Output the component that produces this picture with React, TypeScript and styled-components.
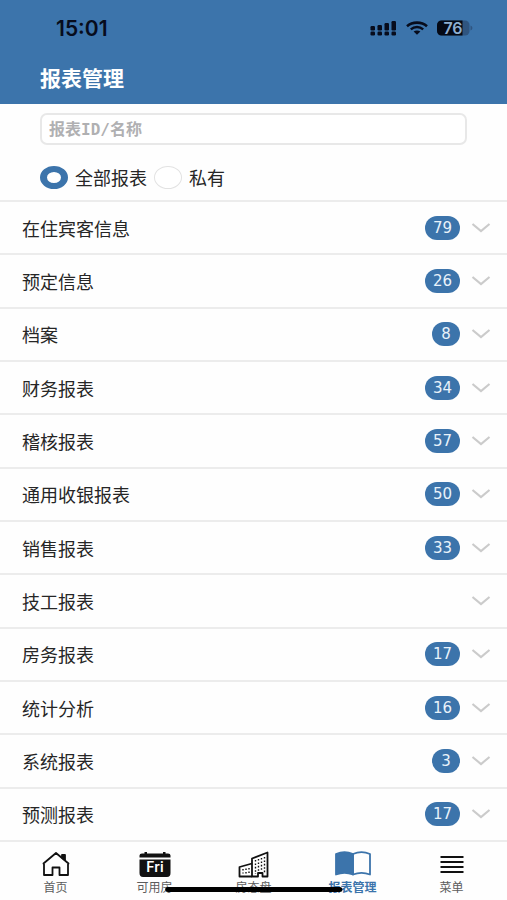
import React, { useState } from "react";
import styled, { createGlobalStyle } from "styled-components";

const BLUE = "#3c74ab";
const LINE = "#ececec";

const GlobalStyle = createGlobalStyle`
  * { box-sizing: border-box; }
  body {
    margin: 0;
    background: #fefefe;
    color: #262626;
    font-family: "DejaVu Sans", "Noto Sans CJK SC", sans-serif;
  }
  button, input { font: inherit; color: inherit; }
`;

const Page = styled.div`
  display: flex;
  flex-direction: column;
  min-height: 100vh;
`;

const Header = styled.header`
  flex: none;
  background: ${BLUE};
  color: #fff;
`;

const StatusBar = styled.div`
  display: flex;
  align-items: center;
  justify-content: space-between;
  height: 56px;
  padding: 0 34px 0 56px;
  color: #070c1c;
`;

const Clock = styled.time`
  padding-top: 2px;
  font: 600 21px/24px Inter, sans-serif;
`;

const StatusIcons = styled.div`
  display: flex;
  align-items: center;
  gap: 9px;
`;

const Title = styled.h1`
  margin: 0;
  padding: 5px 40px 11px;
  font-size: 21px;
  font-weight: 600;
  line-height: 32px;
  font-family: "Noto Sans CJK SC", sans-serif;
`;

const Filters = styled.form`
  flex: none;
  padding: 9px 40px 11px;
`;

const SearchInput = styled.input`
  display: block;
  width: 100%;
  height: 32px;
  padding: 0 7px;
  border: 2px solid #e8e8e8;
  border-radius: 7px;
  background: #fff;
  outline: none;
  font-family: "DejaVu Sans Mono", "Noto Sans CJK SC", monospace;
  font-size: 16px;
  font-weight: 700;
  &::placeholder { color: #b0b0b2; opacity: 1; }
`;

const RadioGroup = styled.div`
  display: flex;
  align-items: center;
  gap: 7px;
  margin-top: 20px;
`;

const RadioLabel = styled.label`
  display: flex;
  align-items: center;
  gap: 7px;
  font-size: 18px;
`;

const RadioText = styled.span`
  padding-top: 4px;
  line-height: 20px;
`;

const Radio = styled.input`
  appearance: none;
  width: 28px;
  height: 23px;
  margin: 0;
  border: 1px solid #e2e2e2;
  border-radius: 50%;
  background: #fff;
  &:checked {
    border: solid ${BLUE};
    border-width: 6px 7px;
  }
`;

const List = styled.ul`
  display: flex;
  flex: 1;
  flex-direction: column;
  margin: 0;
  padding: 0;
  list-style: none;
`;

const Item = styled.li`
  display: flex;
  flex: 1;
  border-top: 2px solid ${LINE};
`;

const RowButton = styled.button`
  display: flex;
  flex: 1;
  align-items: center;
  min-height: 48px;
  padding: 0 16px 0 22px;
  border: 0;
  background: none;
  text-align: left;
  font-size: 18px;
  line-height: 24px;
`;

const RowName = styled.span`
  flex: 1;
  padding-top: 4px;
`;

const Badge = styled.span`
  padding: 0 8px;
  min-width: 28px;
  border-radius: 12px;
  background: ${BLUE};
  color: #e9f2fa;
  font-size: 15px;
  line-height: 24px;
  text-align: center;
`;

const Chevron = styled.svg`
  margin-left: 11px;
`;

const TabBar = styled.nav`
  position: relative;
  display: flex;
  flex: none;
  height: 60px;
  padding: 0 6px;
  border-top: 2px solid ${LINE};
`;

const Tab = styled.a<{ $active?: boolean }>`
  display: flex;
  flex: 1;
  flex-direction: column;
  align-items: center;
  gap: 2px;
  padding-top: 8px;
  color: ${(p) => (p.$active ? BLUE : "#5c5c5c")};
  font-size: 12px;
  font-weight: ${(p) => (p.$active ? 700 : 400)};
  line-height: 16px;
  text-decoration: none;
  svg { color: ${(p) => (p.$active ? BLUE : "#111")}; }
`;

const HomeIndicator = styled.div`
  position: absolute;
  bottom: 8px;
  left: 50%;
  width: 35%;
  height: 5px;
  border-radius: 3px;
  background: #000;
  transform: translateX(-50%);
`;

const reports: { name: string; count?: number }[] = [
  { name: "在住宾客信息", count: 79 },
  { name: "预定信息", count: 26 },
  { name: "档案", count: 8 },
  { name: "财务报表", count: 34 },
  { name: "稽核报表", count: 57 },
  { name: "通用收银报表", count: 50 },
  { name: "销售报表", count: 33 },
  { name: "技工报表" },
  { name: "房务报表", count: 17 },
  { name: "统计分析", count: 16 },
  { name: "系统报表", count: 3 },
  { name: "预测报表", count: 17 },
];

const SignalIcon = () => (
  <svg width="27" height="15" viewBox="0 0 27 15" fill="currentColor" aria-hidden="true">
    <rect x="0.5" y="5" width="4.5" height="4.5" rx="1.2" />
    <rect x="7.5" y="4" width="4.5" height="5.5" rx="1.2" />
    <rect x="14.5" y="2" width="4.5" height="7.5" rx="1.2" />
    <rect x="21.5" y="0" width="4.5" height="9.5" rx="1.2" />
    {[0.5, 7.5, 14.5, 21.5].map((x) => (
      <rect key={x} x={x} y="10.5" width="4.5" height="4" rx="1.2" />
    ))}
  </svg>
);

const WifiIcon = () => (
  <svg width="22" height="14" viewBox="0 0 22 14" fill="none" stroke="currentColor" aria-hidden="true">
    <path d="M1 5.2C6.5 0.4 15.5 0.4 21 5.2" strokeWidth="2.6" />
    <path d="M4.8 8.4C8.4 5.2 13.6 5.2 17.2 8.4" strokeWidth="2.4" />
    <path d="M7.6 10.6C9.6 9 12.4 9 14.4 10.6L11 13.8Z" fill="currentColor" stroke="none" />
  </svg>
);

const BatteryIcon = () => (
  <svg width="36" height="24" viewBox="0 -4 36 24" role="img" aria-label="76">
    <rect x="0" y="0.5" width="32.5" height="15" rx="4.5" fill="#2f5580" />
    <path d="M4.5 0.5H25.5V15.5H4.5A4.5 4.5 0 0 1 0 11V5A4.5 4.5 0 0 1 4.5 0.5Z" fill="#050a16" />
    <path d="M33.5 5.5C36 6.5 36 9.5 33.5 10.5Z" fill="#2f5580" />
    <text x="16" y="13.5" textAnchor="middle" fontFamily="Inter, sans-serif" fontWeight="600" fontSize="16" fill="#8fb0d3">76</text>
  </svg>
);

const HomeIcon = () => (
  <svg width="28" height="28" viewBox="0 0 28 28" fill="none" stroke="currentColor" strokeWidth="1.8" strokeLinejoin="round" aria-hidden="true">
    <path d="M1.5 13.5L14 3L26.5 13.5L26 14V25H17.5V17.5H10.5V25H2V14Z" />
    <path d="M20 7.500V5H23V10Z" fill="currentColor" />
  </svg>
);

const CalendarIcon = () => (
  <svg width="32" height="28" viewBox="0 0 32 28" aria-hidden="true">
    <path d="M0.5 7.5V5.5Q0.5 3.5 3 3.5H5.5V2H8V3.5H24V2H26.500V3.5H29Q31.5 3.5 31.5 5.5V7.5Z" fill="currentColor" />
    <path d="M0.5 9.5H31.5V23Q31.5 27 28 27H4Q0.5 27 0.5 23Z" fill="currentColor" />
    <text x="16" y="22" textAnchor="middle" fontFamily="Inter, sans-serif" fontWeight="600" fontSize="14" fill="#fff">Fri</text>
  </svg>
);

const BuildingIcon = () => (
  <svg width="31" height="28" viewBox="0 0 31 28" fill="none" stroke="currentColor" strokeWidth="1.8" strokeLinejoin="round" aria-hidden="true">
    <path d="M14 26.500H1.5V17L14 13.500" />
    <path d="M14 26.500V8.500L29.500 2.500V26.500H24.500V23H20V26.500Z" />
    <path d="M5 19V23.500M8 18.500V23.500M11 18V23.500M17.500 10V24M20.500 9V21M23.500 8V21M26.500 7V24" strokeDasharray="1.6 1.8" strokeWidth="1.4" />
  </svg>
);

const BookIcon = () => (
  <svg width="36" height="28" viewBox="0 0 36 28" fill="none" stroke="currentColor" strokeWidth="1.8" strokeLinejoin="round" aria-hidden="true">
    <path d="M18 4C13 1.8 6 1.8 1 4V24.5C6 22.5 13 22.5 18 24.5Z" fill="currentColor" />
    <path d="M18 4C23 1.8 30 1.8 35 4V24.5C30 22.5 23 22.5 18 24.5Z" />
  </svg>
);

const MenuIcon = () => (
  <svg width="24" height="28" viewBox="0 0 24 28" stroke="currentColor" strokeWidth="2" aria-hidden="true">
    <path d="M0.5 7H23.5M0.5 12H23.5M0.5 17H23.5M0.5 22H23.5" />
  </svg>
);

const tabs = [
  { label: "首页", Icon: HomeIcon },
  { label: "可用房", Icon: CalendarIcon },
  { label: "房态盘", Icon: BuildingIcon },
  { label: "报表管理", Icon: BookIcon, active: true },
  { label: "菜单", Icon: MenuIcon },
];

export default function App() {
  const [scope, setScope] = useState("all");
  return (
    <Page>
      <GlobalStyle />
      <Header>
        <StatusBar>
          <Clock>15:01</Clock>
          <StatusIcons>
            <SignalIcon />
            <WifiIcon />
            <BatteryIcon />
          </StatusIcons>
        </StatusBar>
        <Title>报表管理</Title>
      </Header>
      <Filters onSubmit={(e) => e.preventDefault()}>
        <SearchInput type="text" placeholder="报表ID/名称" aria-label="报表ID/名称" />
        <RadioGroup role="radiogroup" aria-label="报表管理">
          <RadioLabel>
            <Radio type="radio" name="scope" checked={scope === "all"} onChange={() => setScope("all")} />
            <RadioText>全部报表</RadioText>
          </RadioLabel>
          <RadioLabel>
            <Radio type="radio" name="scope" checked={scope === "private"} onChange={() => setScope("private")} />
            <RadioText>私有</RadioText>
          </RadioLabel>
        </RadioGroup>
      </Filters>
      <List>
        {reports.map(({ name, count }) => (
          <Item key={name}>
            <RowButton type="button">
              <RowName>{name}</RowName>
              {count !== undefined && <Badge>{count}</Badge>}
              <Chevron width="20" height="12" viewBox="0 0 20 12" fill="none" stroke="#cbcbcb" strokeWidth="2.2" aria-hidden="true">
                <path d="M1.5 2L10 9L18.5 2" />
              </Chevron>
            </RowButton>
          </Item>
        ))}
      </List>
      <TabBar>
        {tabs.map(({ label, Icon, active }) => (
          <Tab key={label} href="#" $active={active} aria-current={active ? "page" : undefined}>
            <Icon />
            {label}
          </Tab>
        ))}
        <HomeIndicator />
      </TabBar>
    </Page>
  );
}
